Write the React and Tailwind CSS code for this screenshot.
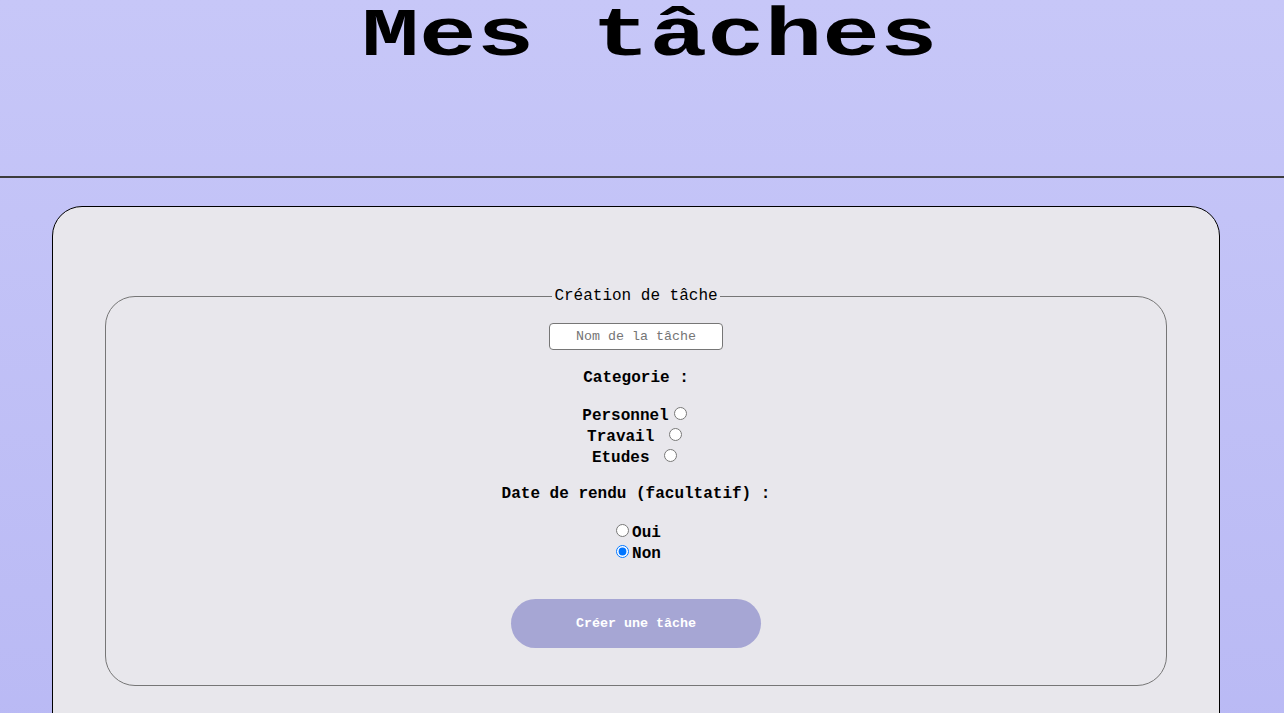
import React, { useState } from "react";

const mono = "font-['Courier_New','Courier','Nimbus_Mono_PS','Liberation_Mono',monospace]";

export default function App() {
  const [category, setCategory] = useState("");
  const [dueDate, setDueDate] = useState("non");

  return (
    <div className={`min-h-screen bg-linear-to-b from-[#c7c7f8] to-[#b8b8f4] ${mono} text-black`}>
      <header className="h-[178px] border-b-2 border-[#3c3c3c] pl-[15px]">
        {/* squashed a little so the bold mono reads like the wide Courier title */}
        <h1 className="origin-top scale-y-[0.72] text-center text-[96px] font-bold leading-[104px]">Mes tâches</h1>
      </header>

      <main className="ml-[52px] mt-[28px] w-[1168px] rounded-[30px] border border-black bg-[#e8e7ec] px-[52px] pt-[80px] pb-[120px]">
        <fieldset className="rounded-[30px] border border-[#767676] pb-[37px] text-center leading-[normal]">
          <legend className="mx-auto px-[2px] text-[16px]">Création de tâche</legend>

          <input
            type="text"
            placeholder="Nom de la tâche"
            className="mt-[18px] h-[27px] w-[174px] rounded-[4px] border border-[#767676] bg-white text-center text-[13.33px] placeholder:text-[#757575] outline-none"
          />

          <p className="mt-[19px] text-[16px] font-bold">Categorie :</p>

          <div className="mt-[17px] text-[16px] font-bold">
            <label htmlFor="perso">Personnel</label>
            <input
              id="perso"
              type="radio"
              name="categorie"
              checked={category === "perso"}
              onChange={() => setCategory("perso")}
              className="mt-[3px] mr-[3px] ml-[5px]"
            />
            <br />
            <label htmlFor="travail">Travail </label>
            <input
              id="travail"
              type="radio"
              name="categorie"
              checked={category === "travail"}
              onChange={() => setCategory("travail")}
              className="mt-[3px] mr-[3px] ml-[5px]"
            />
            <br />
            <label htmlFor="etudes">Etudes </label>
            <input
              id="etudes"
              type="radio"
              name="categorie"
              checked={category === "etudes"}
              onChange={() => setCategory("etudes")}
              className="mt-[3px] mr-[3px] ml-[5px]"
            />
          </div>

          <p className="mt-[18px] text-[16px] font-bold">Date de rendu (facultatif) :</p>

          <div className="mt-[18px] text-[16px] font-bold">
            <input
              id="oui"
              type="radio"
              name="date"
              checked={dueDate === "oui"}
              onChange={() => setDueDate("oui")}
              className="mt-[3px] mr-[3px] ml-[5px]"
            />
            <label htmlFor="oui">Oui</label>
            <br />
            <input
              id="non"
              type="radio"
              name="date"
              checked={dueDate === "non"}
              onChange={() => setDueDate("non")}
              className="mt-[3px] mr-[3px] ml-[5px]"
            />
            <label htmlFor="non">Non</label>
          </div>

          <button className="mt-[36px] h-[49px] w-[250px] rounded-full bg-[#a6a6d4] text-[13.33px] font-bold text-white">
            Créer une tâche
          </button>
        </fieldset>
      </main>
    </div>
  );
}
